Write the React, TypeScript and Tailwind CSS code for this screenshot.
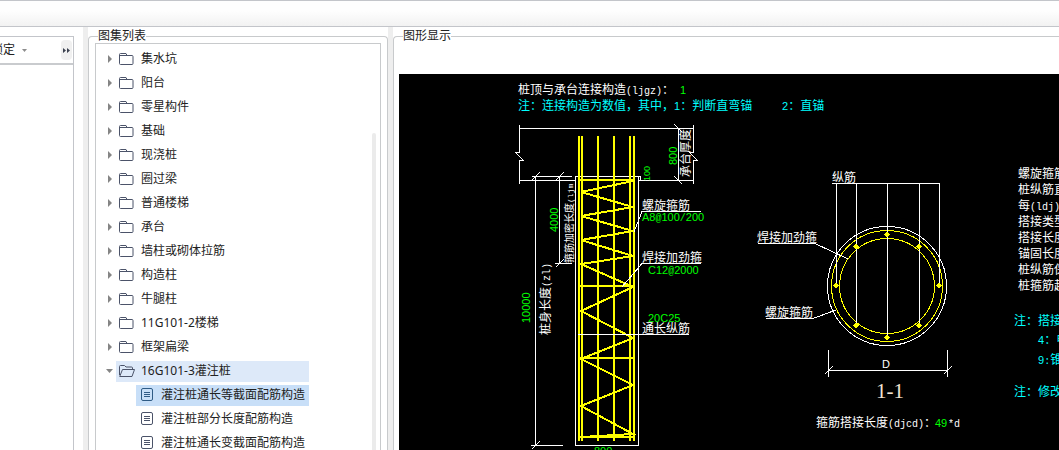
import * as React from 'react';

type Folder = { name: string; items?: string[] };

const FOLDERS: Folder[] = [
  { name: '集水坑' },
  { name: '阳台' },
  { name: '零星构件' },
  { name: '基础' },
  { name: '现浇桩' },
  { name: '圈过梁' },
  { name: '普通楼梯' },
  { name: '承台' },
  { name: '墙柱或砌体拉筋' },
  { name: '构造柱' },
  { name: '牛腿柱' },
  { name: '11G101-2楼梯' },
  { name: '框架扁梁' },
  {
    name: '16G101-3灌注桩',
    items: ['灌注桩通长等截面配筋构造', '灌注桩部分长度配筋构造', '灌注桩通长变截面配筋构造'],
  },
];

const NOTES = ['螺旋箍筋直径', '桩纵筋直径', '每(ldj)米', '搭接类型', '搭接长度', '锚固长度', '桩纵筋保护', '桩箍筋起始'];

function FolderIcon({ open }: { open?: boolean }) {
  return (
    <svg className="h-4 w-4 shrink-0" viewBox="0 0 16 16" fill="none" stroke="#4b5369" strokeLinejoin="round">
      {open ? (
        <>
          <path d="M.5 12V3.5q0-1 1-1h4l1.5 1.5h5.5q1 0 1 1v1.500" />
          <path d="M.7 13.500 3.500 6.500h12l-2.500 7z" />
        </>
      ) : (
        <>
          <path d="M.5 12.500v-9q0-1 1-1h5.500l1 2h5q1 0 1 1v7q0 1-1 1h-11.500q-1 0-1-1z" />
          <path d="M1 4.500h7" />
        </>
      )}
    </svg>
  );
}

function PageIcon() {
  return (
    <svg className="h-4 w-3 shrink-0" viewBox="0 0 12 16" fill="none" stroke="currentColor">
      <rect x=".5" y="1.500" width="11" height="12" rx="1.500" />
      <path d="M3 5.500h6M3 7.500h6M3 9.500h6" />
    </svg>
  );
}

function Tree() {
  const [openName, setOpenName] = React.useState('16G101-3灌注桩');
  const [selected, setSelected] = React.useState('灌注桩通长等截面配筋构造');

  return (
    <ul className="w-fit pl-2.5 pt-[3px]">
      {FOLDERS.map(({ name, items }) => {
        const open = name === openName;
        return (
          <li key={name}>
            <div className="flex h-6 items-center">
              <svg className="h-2 w-2.5 shrink-0" viewBox="0 0 10 8" fill="#858585">
                <path d={open ? 'M0 2h7L3.500 6z' : 'M2 0v8l4-4z'} />
              </svg>
              <button
                type="button"
                aria-expanded={open}
                onClick={() => setOpenName(open ? '' : name)}
                className={`flex h-[21px] grow items-center gap-1.5 whitespace-nowrap pl-[3px] ${open ? 'bg-[#dde9f9]' : ''}`}
              >
                <FolderIcon open={open} />
                {name}
              </button>
            </div>
            {open && items && (
              <ul className="pl-[30px]">
                {items.map((item) => (
                  <li key={item} className="flex h-6 items-center">
                    <button
                      type="button"
                      onClick={() => setSelected(item)}
                      className={`flex h-[21px] grow items-center gap-2 whitespace-nowrap pl-[5px] pr-1 ${item === selected ? 'bg-[#c8dff8]' : ''}`}
                    >
                      <span className={item === selected ? 'text-[#2f5b85]' : 'text-[#4b5369]'}>
                        <PageIcon />
                      </span>
                      {item}
                    </button>
                  </li>
                ))}
              </ul>
            )}
          </li>
        );
      })}
    </ul>
  );
}

type CadProps = { x: number; y: number; color?: string; vertical?: boolean; size?: number; children: string };

// Latin and digits take half the width of a Chinese character
function Cad({ x, y, color = '#fff', vertical, size = 12, children }: CadProps) {
  return (
    <text
      x={x}
      y={y}
      fill={color}
      fontSize={size}
      className="whitespace-pre"
      transform={vertical ? `rotate(-90 ${x} ${y})` : undefined}
    >
      {children.split(/([0-9A-Z]+|[\x20-\x2f\x3a-\x40\x5b-\x7e]+)/).map((part, i) => {
        if (i % 2 === 0) return part;
        return /[0-9A-Z]/.test(part) ? (
          <tspan key={i} fontSize={size - 1} className="font-['Liberation_Sans',sans-serif]">
            {part}
          </tspan>
        ) : (
          <tspan key={i} fontSize={size - 2} className="font-['Liberation_Mono',monospace]">
            {part}
          </tspan>
        );
      })}
    </text>
  );
}

const GREEN = '#00ff00';
const CYAN = '#00ffff';

function PileElevation() {
  return (
    <g>
      <g fill="none" stroke="#fff" shapeRendering="crispEdges">
        {/* cap */}
        <path d="M519 128.500H694M519 180.500H575M638 180.500H694" />
        <path d="M519.500 125V152.500H515.500L523.500 160.500H519.500V184" />
        <path d="M693.500 125V152.500H689.500L697.500 160.500H693.500V184" />
        <path d="M678.500 128V181M674 124l8 8M674 176l8 8" />
        {/* dimensions */}
        <path d="M532 176.500H572M535.500 176V446M559.500 176V264M531 445.500H563M555 263.500H572" />
        <path d="M532 180l8-8M556 180l8-8M556 267l8-8M532 449l8-8" />
        <path d="M575.500 445.500V176.500H638.500V445.500ZM638 176.500H640.500V181" />
      </g>
      <g fill="none" stroke="#ff0" strokeWidth="2" shapeRendering="crispEdges">
        <path d="M579 136V441M582 136V441M598 136V441M614 136V441M630 136V441M634 136V441" />
        <path d="M578 180H634M580 286H634M580 358H634M578 437H634" />
        <path d="M633 181 581 192 633 207 581 216 633 231 581 240 633 256 581 264 633 287 581 311 633 338 581 359 633 385 581 406 633 434 581 437" />
      </g>
      <g fill="none" stroke="#fff" shapeRendering="crispEdges">
        <path d="M701 211.500H642L634 232M701 263.500H642L622 287M578 334.500H689" />
      </g>
      <Cad x={677} y={165} color={GREEN} vertical>800</Cad>
      <Cad x={690} y={177} vertical>承台厚度</Cad>
      <Cad x={650} y={181} color={GREEN} vertical size={10}>100</Cad>
      <Cad x={558} y={232} color={GREEN} vertical>4000</Cad>
      <Cad x={573} y={263} vertical size={10}>箍筋加密长度(ljm</Cad>
      <Cad x={530} y={323} color={GREEN} vertical>10000</Cad>
      <Cad x={550} y={335} vertical>桩身长度(zl)</Cad>
      <Cad x={642} y={210}>螺旋箍筋</Cad>
      <Cad x={642} y={221} color={GREEN}>A8@100/200</Cad>
      <Cad x={642} y={262}>焊接加劲箍</Cad>
      <Cad x={648} y={274} color={GREEN}>C12@2000</Cad>
      <Cad x={648} y={322} color={GREEN}>20C25</Cad>
      <Cad x={642} y={333}>通长纵筋</Cad>
      <Cad x={594} y={455} color={GREEN}>800</Cad>
    </g>
  );
}

const BARS = [
  [886, 234],
  [855, 246],
  [918, 246],
  [835, 285],
  [938, 285],
  [855, 325],
  [918, 325],
  [886, 337],
];

function PileSection() {
  return (
    <g>
      <g fill="none" shapeRendering="crispEdges">
        <circle cx="887" cy="286" r="59.500" stroke="#fff" />
        <circle cx="887" cy="286" r="55.500" stroke="#ff0" />
        <circle cx="887" cy="286" r="47.500" stroke="#ff0" />
        <g stroke="#fff">
          <path d="M832 183.500H940M836.500 183V285M856.500 183V325M887.500 183V337M919.500 183V325M939.500 183V285" />
          <path d="M758 243.500H815L848 259M766 318.500H813L836 310" />
          <path d="M828.500 350V377M947.500 350V377M828 370.500H948M825 374l8-8M944 374l8-8" />
        </g>
      </g>
      <g fill="#ff0" shapeRendering="crispEdges">
        {BARS.map(([x, y]) => (
          <path key={`${x}-${y}`} d={`M${x - 2} ${y}h1v-1h1v-1h2v1h1v1h1v1h-1v1h-1v1h-2v-1h-1v-1h-1z`} />
        ))}
      </g>
      <Cad x={832} y={182}>纵筋</Cad>
      <Cad x={757} y={242}>焊接加劲箍</Cad>
      <Cad x={765} y={317}>螺旋箍筋</Cad>
      <Cad x={882} y={368}>D</Cad>
      <text x="876" y="398" fontSize="21" fill="#f3e3d3" className="font-['Liberation_Serif',serif]">
        1-1
      </text>
      <Cad x={816} y={427}>箍筋搭接长度(djcd)：</Cad>
      <Cad x={935} y={427} color={GREEN}>49</Cad>
      <Cad x={948} y={427}>*d</Cad>
    </g>
  );
}

function Drawing() {
  return (
    <svg
      width="660"
      height="376"
      viewBox="399 74 660 376"
      className="block shrink-0 font-['Noto_Sans_CJK_SC',sans-serif]"
    >
      <Cad x={518} y={94}>桩顶与承台连接构造(ljgz)：</Cad>
      <Cad x={680} y={94} color={GREEN}>1</Cad>
      <Cad x={518} y={110} color={CYAN}>注：连接构造为数值，其中，1：判断直弯锚</Cad>
      <Cad x={782} y={110} color={CYAN}>2：直锚</Cad>
      <PileElevation />
      <PileSection />
      {NOTES.map((note, i) => (
        <Cad key={note} x={1018} y={178 + i * 16}>
          {note}
        </Cad>
      ))}
      <Cad x={1014} y={325} color={CYAN}>注：搭接</Cad>
      <Cad x={1038} y={344} color={CYAN}>4：电</Cad>
      <Cad x={1038} y={364} color={CYAN}>9:锥</Cad>
      <Cad x={1014} y={396} color={CYAN}>注：修改</Cad>
    </svg>
  );
}

export default function App() {
  return (
    <div className="flex h-screen flex-col overflow-hidden bg-white font-['Noto_Sans','Noto_Sans_CJK_SC',sans-serif] text-xs text-[#222]">
      <header className="h-[27px] shrink-0 border-y border-[#c3c5ca] bg-linear-to-b from-[#fefefe] from-40% to-[#f2f2f2]" />

      <main className="flex min-h-0 grow">
        {/* Left toolbar panel */}
        <aside className="w-[83px] shrink-0 pr-[9px] pt-[9px]">
          <div className="h-full border-r border-t border-[#c3c5ca]">
            <div className="flex h-7 items-center justify-between overflow-hidden border-b-2 border-[#c9cbce] pr-px">
              <button type="button" className="-ml-[9px] flex items-center gap-[7px] whitespace-nowrap">
                锁定
                <svg className="h-[3px] w-[5px]" viewBox="0 0 5 3" fill="#8d8d8d">
                  <path d="M0 0h5L2.500 3z" />
                </svg>
              </button>
              <button type="button" aria-label="更多" className="flex h-5 w-[11px] items-center justify-center rounded-sm bg-[#f0f0f0]">
                <svg className="h-[5px] w-[7px]" viewBox="0 0 7 5" fill="#3c4250">
                  <path d="M0 0v5l3-2.500zM4 0v5l3-2.500z" />
                </svg>
              </button>
            </div>
          </div>
        </aside>

        <div className="w-[5px] shrink-0 bg-[#eee]" />

        {/* Atlas list */}
        <div className="flex w-[300px] shrink-0">
          <fieldset className="flex grow flex-col rounded-t border border-b-0 border-[#c8cacc] px-1.5">
            <legend className="ml-[3px] h-[18px] leading-[18px]">图集列表</legend>
            <div className="-mt-0.5 flex grow justify-between overflow-hidden border border-b-0 border-[#c8cacc] pr-1">
              <Tree />
              <div className="mt-[89px] w-1 rounded-t bg-[#ebebeb]" />
            </div>
          </fieldset>
        </div>

        <div className="w-[5px] shrink-0 bg-[#eee]" />

        {/* Drawing view */}
        <fieldset className="flex min-w-0 grow flex-col overflow-hidden rounded-tl border-l border-t border-[#c8cacc] pl-[5px]">
          <legend className="ml-1 h-[18px] leading-[18px]">图形显示</legend>
          <div className="mt-[29px] grow overflow-hidden bg-black">
            <Drawing />
          </div>
        </fieldset>
      </main>
    </div>
  );
}
